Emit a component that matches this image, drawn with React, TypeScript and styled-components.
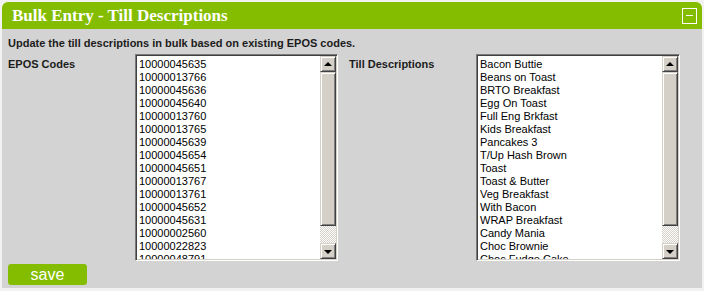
import * as React from "react";
import styled, { createGlobalStyle } from "styled-components";

const GlobalStyle = createGlobalStyle`
  body {
    margin: 0;
    background: #f2f2f2;
    font-family: "Liberation Sans", Arial, sans-serif;
  }
`;

const Panel = styled.div`
  margin: 2px;
  width: 700px;
  border-radius: 6px 6px 0 0;
  overflow: hidden;
`;

const Header = styled.div`
  display: flex;
  align-items: center;
  justify-content: space-between;
  height: 27px;
  padding: 0 5px 0 10px;
  background: #84bd00;
`;

const Title = styled.h1`
  margin: 0;
  font-family: "Liberation Serif", "Times New Roman", serif;
  font-size: 17px;
  font-weight: bold;
  color: #fff;
`;

const CollapseButton = styled.button`
  display: flex;
  align-items: center;
  justify-content: center;
  width: 15px;
  height: 16px;
  padding: 0;
  border: 1px solid #fff;
  background: none;

  &::after {
    content: "";
    width: 7px;
    height: 1px;
    background: #fff;
  }
`;

const Body = styled.div`
  height: 259px;
  box-sizing: border-box;
  padding: 7px 6px 0 6px;
  background: #d3d3d3;
`;

const Intro = styled.p`
  margin: 0 0 4px;
  font-size: 11px;
  line-height: 14px;
  font-weight: bold;
  color: #1c1c1c;
`;

const Fields = styled.div`
  display: flex;
  gap: 11px;
`;

const Field = styled.div`
  display: flex;
`;

const Label = styled.label`
  width: 127px;
  padding-top: 4px;
  font-size: 11px;
  line-height: 13px;
  font-weight: bold;
  color: #1c1c1c;
`;

const ListBox = styled.div<{ $width: number }>`
  display: flex;
  width: ${p => p.$width}px;
  height: 207px;
  box-sizing: border-box;
  border: 1px solid;
  border-color: #7a7a7a #ffffff #ffffff #7a7a7a;
  box-shadow: inset 1px 1px 0 #404040, inset -1px -1px 0 #d4d0c8;
  padding: 1px;
  background: #fff;
`;

const Items = styled.ul`
  flex: 1;
  margin: 0;
  padding: 2px 0 0 2px;
  list-style: none;
  overflow: hidden;
  font-size: 11px;
  line-height: 13px;
  color: #000;
  white-space: nowrap;
`;

const ScrollBar = styled.div`
  display: flex;
  flex-direction: column;
  width: 16px;
`;

const ScrollPart = styled.div`
  box-sizing: border-box;
  background: #d4d0c8;
  border: 1px solid;
  border-color: #d4d0c8 #404040 #404040 #d4d0c8;
  box-shadow: inset 1px 1px 0 #fff, inset -1px -1px 0 #808080;
`;

const ArrowButton = styled(ScrollPart)<{ $down?: boolean }>`
  display: flex;
  align-items: center;
  justify-content: center;
  height: 16px;

  &::after {
    content: "";
    border-left: 4px solid transparent;
    border-right: 4px solid transparent;
    ${p =>
      p.$down
        ? "border-top: 4px solid #000; margin-top: 1px;"
        : "border-bottom: 4px solid #000; margin-top: -1px;"}
  }
`;

const Thumb = styled(ScrollPart)`
  height: 154px;
`;

const Track = styled.div`
  flex: 1;
  background: repeating-conic-gradient(#d4d0c8 0 25%, #ffffff 0 50%) 0 0 / 2px 2px;
`;

const SaveButton = styled.button`
  display: block;
  margin-top: 3px;
  width: 79px;
  height: 21px;
  padding: 0;
  border: none;
  border-radius: 3px;
  background: #84bd00;
  font-family: "Liberation Sans", Arial, sans-serif;
  font-size: 16px;
  color: #fff;
`;

const eposCodes = [
  "10000045635",
  "10000013766",
  "10000045636",
  "10000045640",
  "10000013760",
  "10000013765",
  "10000045639",
  "10000045654",
  "10000045651",
  "10000013767",
  "10000013761",
  "10000045652",
  "10000045631",
  "10000002560",
  "10000022823",
  "10000048791"
];

const tillDescriptions = [
  "Bacon Buttie",
  "Beans on Toast",
  "BRTO Breakfast",
  "Egg On Toast",
  "Full Eng Brkfast",
  "Kids Breakfast",
  "Pancakes 3",
  "T/Up Hash Brown",
  "Toast",
  "Toast & Butter",
  "Veg Breakfast",
  "With Bacon",
  "WRAP Breakfast",
  "Candy Mania",
  "Choc Brownie",
  "Choc Fudge Cake"
];

function List({ items, width }: { items: string[]; width: number }) {
  return (
    <ListBox $width={width}>
      <Items>
        {items.map(item => (
          <li key={item}>{item}</li>
        ))}
      </Items>
      <ScrollBar>
        <ArrowButton />
        <Thumb />
        <Track />
        <ArrowButton $down />
      </ScrollBar>
    </ListBox>
  );
}

export default function App() {
  return (
    <>
      <GlobalStyle />
      <Panel>
        <Header>
          <Title>Bulk Entry - Till Descriptions</Title>
          <CollapseButton title="collapse" />
        </Header>
        <Body>
          <Intro>Update the till descriptions in bulk based on existing EPOS codes.</Intro>
          <Fields>
            <Field>
              <Label>EPOS Codes</Label>
              <List items={eposCodes} width={203} />
            </Field>
            <Field>
              <Label>Till Descriptions</Label>
              <List items={tillDescriptions} width={204} />
            </Field>
          </Fields>
          <SaveButton>save</SaveButton>
        </Body>
      </Panel>
    </>
  );
}
